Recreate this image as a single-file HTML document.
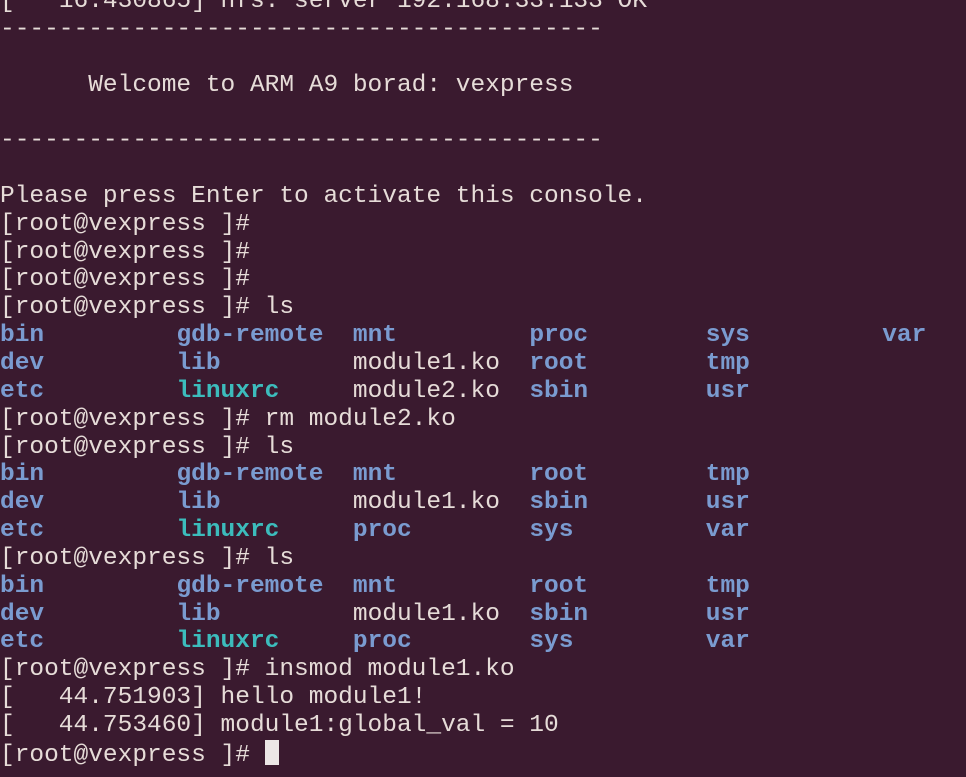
<!DOCTYPE html>
<html><head><meta charset="utf-8"><style>
html,body{margin:0;padding:0;background:#3a1a2f;width:966px;height:777px;overflow:hidden}
pre{position:absolute;left:0;top:-12px;margin:0;font-family:"Liberation Mono",monospace;font-size:24.5px;line-height:27.85px;color:#e6dcd8;letter-spacing:0}
.b{color:#7a9bd0;font-weight:bold}
.c{color:#3cbcbc;font-weight:bold}
.cur{display:inline-block;width:14px;height:25px;background:#ece6e6;vertical-align:-4px}
</style></head><body><pre>[   16.430865] nfs: server 192.168.33.133 OK
-----------------------------------------

      Welcome to ARM A9 borad: vexpress

-----------------------------------------

Please press Enter to activate this console.
[root@vexpress ]#
[root@vexpress ]#
[root@vexpress ]#
[root@vexpress ]# ls
<span class="b">bin</span>         <span class="b">gdb-remote</span>  <span class="b">mnt</span>         <span class="b">proc</span>        <span class="b">sys</span>         <span class="b">var</span>
<span class="b">dev</span>         <span class="b">lib</span>         module1.ko  <span class="b">root</span>        <span class="b">tmp</span>
<span class="b">etc</span>         <span class="c">linuxrc</span>     module2.ko  <span class="b">sbin</span>        <span class="b">usr</span>
[root@vexpress ]# rm module2.ko
[root@vexpress ]# ls
<span class="b">bin</span>         <span class="b">gdb-remote</span>  <span class="b">mnt</span>         <span class="b">root</span>        <span class="b">tmp</span>
<span class="b">dev</span>         <span class="b">lib</span>         module1.ko  <span class="b">sbin</span>        <span class="b">usr</span>
<span class="b">etc</span>         <span class="c">linuxrc</span>     <span class="b">proc</span>        <span class="b">sys</span>         <span class="b">var</span>
[root@vexpress ]# ls
<span class="b">bin</span>         <span class="b">gdb-remote</span>  <span class="b">mnt</span>         <span class="b">root</span>        <span class="b">tmp</span>
<span class="b">dev</span>         <span class="b">lib</span>         module1.ko  <span class="b">sbin</span>        <span class="b">usr</span>
<span class="b">etc</span>         <span class="c">linuxrc</span>     <span class="b">proc</span>        <span class="b">sys</span>         <span class="b">var</span>
[root@vexpress ]# insmod module1.ko
[   44.751903] hello module1!
[   44.753460] module1:global_val = 10
[root@vexpress ]# <span class="cur"></span></pre></body></html>
